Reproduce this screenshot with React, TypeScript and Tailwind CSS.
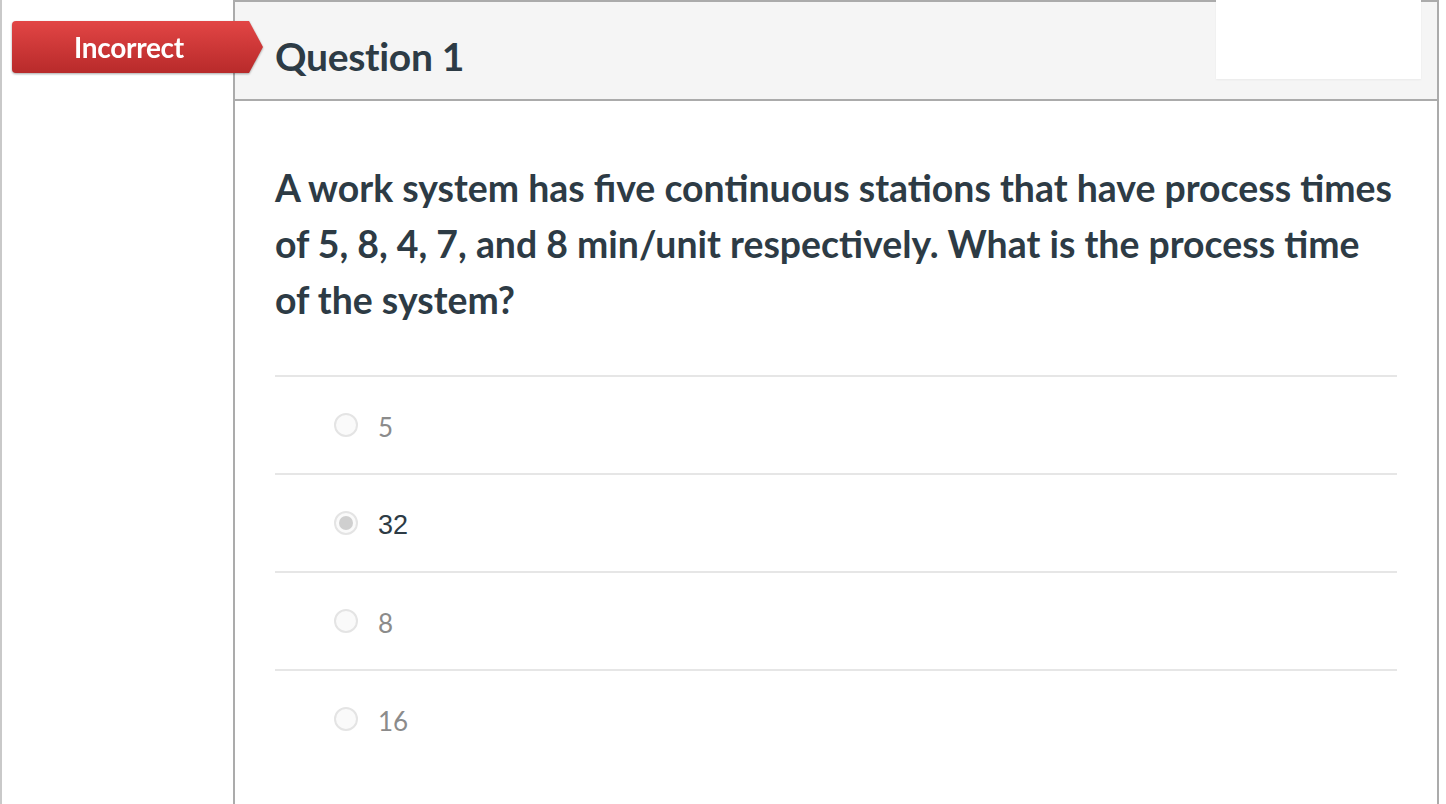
import React from 'react';

const answers = [
    { label: '5', selected: false },
    { label: '32', selected: true },
    { label: '8', selected: false },
    { label: '16', selected: false },
];

const Radio: React.FC<{ selected: boolean }> = ({ selected }) => (
    <span className="w-6 h-6 rounded-full border-2 border-[#e4e4e4] bg-[#fafafa] flex items-center justify-center shrink-0">
        {selected && <span className="w-[14px] h-[14px] rounded-full bg-[#cfcfcf]" />}
    </span>
);

const App: React.FC = () => {
    return (
        <div className="w-[1446px] h-[804px] bg-white flex overflow-hidden font-['Lato','Noto_Sans',sans-serif]">
            <div className="w-[233px] shrink-0 border-l-2 border-[#c9c9c9] relative">
                <div className="absolute left-[10px] top-[21px] z-10 flex items-center drop-shadow-[0_1px_1px_rgba(0,0,0,0.35)]">
                    <div className="w-[236px] h-[52px] rounded-l-[4px] bg-gradient-to-b from-[#e24545] to-[#b82a2a] flex items-center justify-center pr-[2px]">
                        <span className="text-white text-[28px] font-bold tracking-[-0.3px]">Incorrect</span>
                    </div>
                    <svg width="16" height="52" viewBox="0 0 16 52" className="-ml-px">
                        <defs>
                            <linearGradient id="arrowRed" x1="0" y1="0" x2="0" y2="1">
                                <stop offset="0%" stopColor="#e24545" />
                                <stop offset="100%" stopColor="#b82a2a" />
                            </linearGradient>
                        </defs>
                        <path d="M0 0 L2 0 L16 26 L2 52 L0 52 Z" fill="url(#arrowRed)" />
                    </svg>
                </div>
            </div>
            <div className="w-[1206px] shrink-0 border-x-2 border-t-2 border-[#ababab]">
                <div className="h-[99px] bg-[#f5f5f5] border-b-2 border-[#ababab] flex items-start justify-between pl-[40px] pr-[16px]">
                    <h2 className="mt-[32px] text-[39px] leading-[44px] font-bold text-[#2d3b45] tracking-[-0.3px]">Question 1</h2>
                    <div className="w-[205px] h-[79px] -mt-[2px] bg-white shadow-[0_1px_2px_rgba(0,0,0,0.05)]" />
                </div>
                <div className="pl-[40px] pr-[40px] pt-[59px]">
                    <p className="text-[37.4px] leading-[56px] font-bold text-[#2d3b45]">
                        A work system has five continuous stations that have process times of 5, 8, 4, 7, and 8 min/unit respectively. What is the process time of the system?
                    </p>
                    <ul className="mt-[47px]">
                        {answers.map(a => (
                            <li key={a.label} className="h-[98px] border-t-2 border-[#e6e6e6] flex items-center pl-[59px] gap-[20px]">
                                <Radio selected={a.selected} />
                                {a.selected ? (
                                    <span className="text-[27px] text-[#2d3b45] mt-[4px] font-['Liberation_Sans',sans-serif]">{a.label}</span>
                                ) : (
                                    <span className="text-[26px] text-[#8b8b8b] mt-[4px]">{a.label}</span>
                                )}
                            </li>
                        ))}
                    </ul>
                </div>
            </div>
        </div>
    );
};

export default App;
